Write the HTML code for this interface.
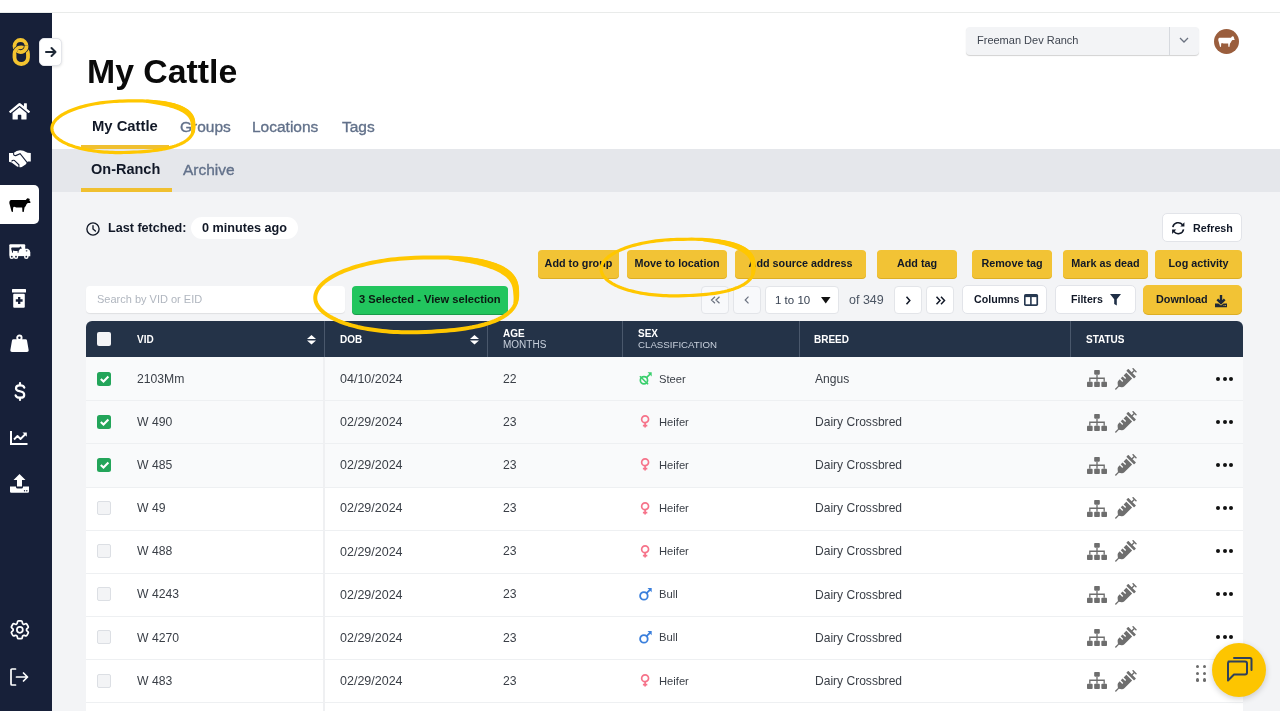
<!DOCTYPE html>
<html><head><meta charset="utf-8"><style>
*{box-sizing:border-box;margin:0;padding:0}
html,body{width:1280px;height:720px;overflow:hidden;background:#fff;font-family:"Liberation Sans",sans-serif}
.a{position:absolute}
.t{position:absolute;white-space:nowrap;line-height:1;will-change:transform}
.yb{will-change:transform}
svg{position:absolute;overflow:visible}
</style></head><body>
<div class="a" style="left:0px;top:12px;width:1280px;height:1px;background:#e9ebea;"></div>
<div class="a" style="left:0px;top:13px;width:52px;height:698px;background:#172039;"></div>
<div class="a" style="left:0px;top:13px;width:52px;height:1px;background:#0e1a33;"></div>
<div class="a" style="left:52px;top:149px;width:1228px;height:43px;background:#e5e7eb;"></div>
<div class="a" style="left:52px;top:192px;width:1228px;height:519px;background:#f3f4f6;"></div>
<svg style="left:12px;top:38px;" width="19" height="28" viewBox="0 0 19 28"><circle cx="8.5" cy="8" r="6" fill="none" stroke="#f4c430" stroke-width="3.8"/><rect x="2.5" y="9.4" width="13.5" height="16.6" rx="6.6" fill="none" stroke="#172039" stroke-width="5.2"/><rect x="2.5" y="9.4" width="13.5" height="16.6" rx="6.6" fill="none" stroke="#f4c430" stroke-width="3.8"/><path d="M14.48 7.48 A6 6 0 0 1 5.50 13.20" fill="none" stroke="#172039" stroke-width="5.2"/><path d="M14.48 7.48 A6 6 0 0 1 5.50 13.20" fill="none" stroke="#f4c430" stroke-width="3.8"/></svg>
<div class="a" style="left:39px;top:38px;width:23px;height:28px;background:#fff;border-radius:5px;border:1px solid #e3e5ea;box-shadow:0 1px 3px rgba(0,0,0,.12)"></div>
<svg style="left:45px;top:46px;" width="12" height="12" viewBox="0 0 12 12"><path d="M1 6 H10.5 M6.5 2 L10.5 6 L6.5 10" fill="none" stroke="#1f2937" stroke-width="2" stroke-linecap="round" stroke-linejoin="round"/></svg>
<svg style="left:9px;top:101.8px;" width="21.1" height="18.7" viewBox="0 0 576 512"><path fill="#fff" d="M280.37 148.26L96 300.11V464a16 16 0 0 0 16 16l112.06-.29a16 16 0 0 0 15.92-16V368a16 16 0 0 1 16-16h64a16 16 0 0 1 16 16v95.64a16 16 0 0 0 16 16.05L464 480a16 16 0 0 0 16-16V300L295.67 148.26a12.19 12.19 0 0 0-15.3 0zM571.6 251.47L488 182.56V44.05a12 12 0 0 0-12-12h-56a12 12 0 0 0-12 12v72.61L318.47 43a48 48 0 0 0-61 0L4.34 251.47a12 12 0 0 0-1.6 16.9l25.5 31A12 12 0 0 0 45.15 301l235.22-193.74a12.19 12.19 0 0 1 15.3 0L530.9 301a12 12 0 0 0 16.9-1.6l25.5-31a12 12 0 0 0-1.7-16.93z"/></svg>
<svg style="left:8.7px;top:149.5px;" width="22" height="18" viewBox="0 0 22 18"><path fill="#fff" d="M0 3 H4.6 Q7.5 0.6 11 0.3 Q14 0.3 18.5 2.7 L21.8 3 V11.6 H18.8 L16.6 14.6 L12.8 17 Q10 17.8 8 16.6 L2.6 12.4 L0 11.8 Z"/><path fill="none" stroke="#172039" stroke-width="1.1" stroke-linecap="round" d="M4.6 3.2 Q4.3 5.7 6.8 5.6 L11.1 3.7 L18.4 12.9"/><path fill="none" stroke="#172039" stroke-width="1.1" d="M2.6 11.4 Q3.8 9.6 5.6 10.6 L9.9 14.8 V18"/></svg>
<div class="a" style="left:0px;top:185px;width:39px;height:39px;background:#fff;border-radius:0 5px 5px 0"></div>
<svg style="left:8.7px;top:198px;" width="22" height="14" viewBox="0 0 22 14"><g fill="#000"><path d="M1.8 2.1 Q0.2 2.4 0.3 5 L2.5 13.3 Q3 14.2 3.9 13.7 L4.1 10 Q4.5 8.2 6 9.1 Q7 9.6 9 9.6 H13.2 L13.4 13.4 Q13.9 14.3 14.8 13.7 L15.5 9.4 Q17 8 17.5 6.2 L18.8 4.9 H21 Q21.9 4.6 21.4 3.8 L20.4 2.4 L20.8 0.9 L19.6 0.4 L18.3 0.2 L16.8 2.1 Z"/></g></svg>
<svg style="left:9.3px;top:243.8px;" width="22" height="15" viewBox="0 0 22 15"><g fill="#fff"><rect x="0.3" y="0.2" width="15.9" height="12" rx="1"/><path d="M15.5 4.7 H18.8 Q21.3 5.5 21.3 8.6 V12.2 H15.5 Z"/><circle cx="2.8" cy="12.7" r="2.3"/><circle cx="7" cy="12.7" r="2.3"/><circle cx="17.3" cy="12.7" r="2.3"/></g><g fill="#172039"><circle cx="2.8" cy="12.7" r="0.9"/><circle cx="7" cy="12.7" r="0.9"/><circle cx="17.3" cy="12.7" r="0.9"/><path d="M9.3 12.4 H14.8 V13.2 H9.3 Z"/><ellipse cx="17.6" cy="6.8" rx="0.9" ry="0.6"/></g><g fill="#172039" transform="translate(2,2.5) scale(0.5 0.46)"><path d="M1.8 2.1 Q0.2 2.4 0.3 5 L2.5 13.3 Q3 14.2 3.9 13.7 L4.1 10 Q4.5 8.2 6 9.1 Q7 9.6 9 9.6 H13.2 L13.4 13.4 Q13.9 14.3 14.8 13.7 L15.5 9.4 Q17 8 17.5 6.2 L18.8 4.9 H21 Q21.9 4.6 21.4 3.8 L20.4 2.4 L20.8 0.9 L19.6 0.4 L18.3 0.2 L16.8 2.1 Z"/></g></svg>
<svg style="left:12px;top:289px;" width="14" height="19" viewBox="0 0 14 19"><rect x="0" y="0" width="14" height="3.5" rx="0.5" fill="#fff"/><rect x="1.2" y="4.8" width="11.6" height="14" rx="1" fill="#fff"/><path d="M7.2 8.1 V14.9 M3.8 11.5 H10.6" stroke="#172039" stroke-width="2.3"/></svg>
<svg style="left:10px;top:335px;" width="19" height="17" viewBox="0 0 19 17"><circle cx="9.4" cy="2.75" r="2.2" fill="none" stroke="#fff" stroke-width="1.9"/><path fill="#fff" d="M3.5 4.2 H15.5 Q16.8 4.2 17 5.4 L18.7 15.2 Q18.8 17 17 17 H2 Q0.2 17 0.3 15.2 L2 5.4 Q2.2 4.2 3.5 4.2 Z"/></svg>
<svg style="left:13.5px;top:382px;" width="12" height="19" viewBox="0 0 12 19"><g fill="none" stroke="#fff" stroke-width="2.2" stroke-linecap="round"><path d="M10.3 5.6 Q9.6 3.4 6.4 3.4 H5.6 Q2 3.4 2 6.3 Q2 8.6 5.4 9.2 L6.8 9.5 Q10.2 10.2 10.2 12.9 Q10.2 15.7 6.6 15.7 H5.6 Q2.3 15.7 1.6 13.4"/><path d="M6 1 V3.2 M6 15.8 V18"/></g></svg>
<svg style="left:10px;top:431px;" width="18" height="14" viewBox="0 0 18 14"><path d="M1 0 V13 H17.5" fill="none" stroke="#fff" stroke-width="2"/><path d="M4 8.5 L7.5 5 L10.5 8 L15.5 3" fill="none" stroke="#fff" stroke-width="1.8" stroke-linejoin="round"/><path d="M12.5 1.5 H16.8 V5.8 Z" fill="#fff"/></svg>
<svg style="left:10px;top:474px;" width="19" height="19" viewBox="0 0 19 19"><path fill="#fff" d="M9.5 0 L15.5 6 H12 V12.5 H7 V6 H3.5 Z"/><path fill="#fff" d="M0 12.5 H6 V13.2 Q6.2 14.5 7.5 14.5 H11.5 Q12.8 14.5 13 13.2 V12.5 H19 V17.5 Q19 18.8 17.7 18.8 H1.3 Q0 18.8 0 17.5 Z"/><circle cx="14.5" cy="16.8" r="0.7" fill="#172039"/><circle cx="16.8" cy="16.8" r="0.7" fill="#172039"/></svg>
<svg style="left:7.9px;top:618.4px;" width="23.7" height="23.7" viewBox="0 0 24 24"><g fill="none" stroke="#fff" stroke-width="1.75" stroke-linejoin="round"><path d="M9.594 3.94c.09-.542.56-.94 1.11-.94h2.593c.55 0 1.02.398 1.11.94l.213 1.281c.063.374.313.686.645.87.074.04.147.083.22.127.325.196.72.257 1.075.124l1.217-.456a1.125 1.125 0 0 1 1.37.49l1.296 2.247a1.125 1.125 0 0 1-.26 1.431l-1.003.827c-.293.241-.438.613-.43.992a7.723 7.723 0 0 1 0 .255c-.008.378.137.75.43.991l1.004.827c.424.35.534.955.26 1.43l-1.298 2.247a1.125 1.125 0 0 1-1.369.491l-1.217-.456c-.355-.133-.75-.072-1.076.124a6.47 6.47 0 0 1-.22.128c-.331.183-.581.495-.644.869l-.213 1.281c-.09.543-.56.94-1.11.94h-2.594c-.55 0-1.019-.398-1.11-.94l-.213-1.281c-.062-.374-.312-.686-.644-.87a6.52 6.52 0 0 1-.22-.127c-.325-.196-.72-.257-1.076-.124l-1.217.456a1.125 1.125 0 0 1-1.369-.49l-1.297-2.247a1.125 1.125 0 0 1 .26-1.431l1.004-.827c.292-.24.437-.613.43-.991a6.932 6.932 0 0 1 0-.255c.007-.38-.138-.751-.43-.992l-1.004-.827a1.125 1.125 0 0 1-.26-1.43l1.297-2.247a1.125 1.125 0 0 1 1.37-.491l1.216.456c.356.133.751.072 1.076-.124.072-.044.146-.086.22-.128.332-.183.582-.495.644-.869l.214-1.28Z"/><circle cx="12" cy="12" r="3"/></g></svg>
<svg style="left:10px;top:668px;" width="19" height="18" viewBox="0 0 19 18"><g fill="none" stroke="#fff" stroke-width="1.7" stroke-linecap="round" stroke-linejoin="round"><path d="M5.5 1 H2 Q1 1 1 2 V16 Q1 17 2 17 H5.5"/><path d="M6.5 9 H17.5 M13.5 5 L17.5 9 L13.5 13"/></g></svg>
<div class="t" style="left:86.5px;top:54.89px;font-size:33.8px;color:#0a0a0a;font-weight:bold;">My Cattle</div>
<div class="t" style="left:91.5px;top:118.97px;font-size:14.8px;color:#111827;font-weight:bold;">My Cattle</div>
<div class="a" style="left:81px;top:145px;width:88px;height:4px;background:#f0c030;"></div>
<div class="t" style="left:180px;top:118.88px;font-size:15.5px;color:#62718a;-webkit-text-stroke:0.35px #62718a">Groups</div>
<div class="t" style="left:252px;top:118.88px;font-size:15.5px;color:#62718a;-webkit-text-stroke:0.35px #62718a">Locations</div>
<div class="t" style="left:342px;top:118.88px;font-size:15.5px;color:#62718a;-webkit-text-stroke:0.35px #62718a">Tags</div>
<div class="t" style="left:91.3px;top:161.73px;font-size:14.5px;color:#111827;font-weight:bold;">On-Ranch</div>
<div class="a" style="left:81px;top:188px;width:91px;height:4px;background:#f0c030;"></div>
<div class="t" style="left:183px;top:162.38px;font-size:15.5px;color:#62718a;-webkit-text-stroke:0.35px #62718a">Archive</div>
<div class="a" style="left:966px;top:27px;width:233px;height:28px;background:#f3f4f6;border-radius:4px;box-shadow:0 1px 1px rgba(0,0,0,.18)"></div>
<div class="a" style="left:1169px;top:27px;width:1px;height:28px;background:#d6d9de;"></div>
<div class="t" style="left:977px;top:35.19px;font-size:11px;color:#3f4550;">Freeman Dev Ranch</div>
<svg style="left:1179px;top:37px;" width="10" height="6" viewBox="0 0 10 6"><path d="M1 1 L5 5 L9 1" fill="none" stroke="#6b7280" stroke-width="1.3"/></svg>
<div class="a" style="left:1213.5px;top:28.5px;width:25.5px;height:25.5px;border-radius:50%;background:#9a5e3d"></div>
<svg style="left:1217.8px;top:36px;" width="17" height="11.2" viewBox="0 0 22 14"><g fill="#fff"><path d="M1.8 2.1 Q0.2 2.4 0.3 5 L2.5 13.3 Q3 14.2 3.9 13.7 L4.1 10 Q4.5 8.2 6 9.1 Q7 9.6 9 9.6 H13.2 L13.4 13.4 Q13.9 14.3 14.8 13.7 L15.5 9.4 Q17 8 17.5 6.2 L18.8 4.9 H21 Q21.9 4.6 21.4 3.8 L20.4 2.4 L20.8 0.9 L19.6 0.4 L18.3 0.2 L16.8 2.1 Z"/></g></svg>
<svg style="left:86px;top:222px;" width="14" height="14" viewBox="0 0 14 14"><circle cx="7" cy="7" r="6.1" fill="none" stroke="#111827" stroke-width="1.35"/><path d="M7 3.6 V7 L9.4 9.1" fill="none" stroke="#111827" stroke-width="1.35" stroke-linecap="round"/></svg>
<div class="t" style="left:108px;top:221.63px;font-size:12.6px;color:#111827;font-weight:bold;">Last fetched:</div>
<div class="a" style="left:191px;top:217px;width:107px;height:22px;background:#fff;border-radius:11px"></div>
<div class="t" style="left:202px;top:221.59px;font-size:12.65px;color:#111827;font-weight:bold;">0 minutes ago</div>
<div class="a" style="left:1162px;top:213px;width:80px;height:29px;background:#fff;border-radius:5px;border:1px solid #e2e4e9"></div>
<svg style="left:1171px;top:221px;" width="14" height="14" viewBox="0 0 14 14"><g fill="none" stroke="#111827" stroke-width="1.55"><path d="M1.82 6.06 A5.5 5.5 0 0 1 11.53 3.81"/><path d="M12.58 8.34 A5.5 5.5 0 0 1 2.87 10.59"/></g><path d="M13.4 1.2 V5.4 H9.3 Z M1.1 12.9 V8.6 H5.2 Z" fill="#111827"/></svg>
<div class="t" style="left:1193px;top:222.54px;font-size:10.7px;color:#111827;font-weight:bold;">Refresh</div>
<div class="a yb" style="left:538px;top:250px;width:81px;height:28px;background:#f2c335;border-radius:4px;box-shadow:0 1px 0 #dcae25;display:flex;align-items:center;justify-content:center;font-size:10.8px;font-weight:bold;color:#111827;white-space:nowrap;line-height:1;padding-bottom:1.5px">Add to group</div>
<div class="a yb" style="left:627px;top:250px;width:100px;height:28px;background:#f2c335;border-radius:4px;box-shadow:0 1px 0 #dcae25;display:flex;align-items:center;justify-content:center;font-size:10.8px;font-weight:bold;color:#111827;white-space:nowrap;line-height:1;padding-bottom:1.5px">Move to location</div>
<div class="a yb" style="left:735px;top:250px;width:131px;height:28px;background:#f2c335;border-radius:4px;box-shadow:0 1px 0 #dcae25;display:flex;align-items:center;justify-content:center;font-size:10.8px;font-weight:bold;color:#111827;white-space:nowrap;line-height:1;padding-bottom:1.5px">Add source address</div>
<div class="a yb" style="left:877px;top:250px;width:80px;height:28px;background:#f2c335;border-radius:4px;box-shadow:0 1px 0 #dcae25;display:flex;align-items:center;justify-content:center;font-size:10.8px;font-weight:bold;color:#111827;white-space:nowrap;line-height:1;padding-bottom:1.5px">Add tag</div>
<div class="a yb" style="left:972px;top:250px;width:80px;height:28px;background:#f2c335;border-radius:4px;box-shadow:0 1px 0 #dcae25;display:flex;align-items:center;justify-content:center;font-size:10.8px;font-weight:bold;color:#111827;white-space:nowrap;line-height:1;padding-bottom:1.5px">Remove tag</div>
<div class="a yb" style="left:1063px;top:250px;width:85px;height:28px;background:#f2c335;border-radius:4px;box-shadow:0 1px 0 #dcae25;display:flex;align-items:center;justify-content:center;font-size:10.8px;font-weight:bold;color:#111827;white-space:nowrap;line-height:1;padding-bottom:1.5px">Mark as dead</div>
<div class="a yb" style="left:1155px;top:250px;width:87px;height:28px;background:#f2c335;border-radius:4px;box-shadow:0 1px 0 #dcae25;display:flex;align-items:center;justify-content:center;font-size:10.8px;font-weight:bold;color:#111827;white-space:nowrap;line-height:1;padding-bottom:1.5px">Log activity</div>
<div class="a" style="left:86px;top:286px;width:259px;height:27px;background:#fff;border-radius:4px;box-shadow:0 1px 1px rgba(0,0,0,.08)"></div>
<div class="t" style="left:97px;top:294.19px;font-size:11px;color:#b0b6bf;">Search by VID or EID</div>
<div class="a" style="left:352px;top:286px;width:156px;height:28px;background:#22c55e;border-radius:4px;box-shadow:0 1px 0 #1a9a4a"></div>
<div class="t" style="left:359px;top:294.36px;font-size:11.15px;color:#0b1a12;font-weight:bold;">3 Selected - View selection</div>
<div class="a" style="left:700.8px;top:285.5px;width:28px;height:28px;background:#f8f9fb;border-radius:4px;border:1px solid #e3e5e9"></div>
<div class="a" style="left:733px;top:285.5px;width:28px;height:28px;background:#f8f9fb;border-radius:4px;border:1px solid #e3e5e9"></div>
<div class="a" style="left:893.5px;top:285.5px;width:28px;height:28px;background:#fff;border-radius:4px;border:1px solid #e3e5e9"></div>
<div class="a" style="left:926px;top:285.5px;width:28px;height:28px;background:#fff;border-radius:4px;border:1px solid #e3e5e9"></div>
<svg style="left:710px;top:296px;" width="11" height="8" viewBox="0 0 11 8"><path d="M5 0.8 L1.5 4 L5 7.2 M9.5 0.8 L6 4 L9.5 7.2" fill="none" stroke="#6b7280" stroke-width="1.2"/></svg>
<svg style="left:744px;top:296px;" width="6" height="8" viewBox="0 0 6 8"><path d="M4.5 0.6 L1.2 4 L4.5 7.4" fill="none" stroke="#6b7280" stroke-width="1.2"/></svg>
<svg style="left:905px;top:295.5px;" width="6" height="9" viewBox="0 0 6 9"><path d="M1.5 0.8 L4.8 4.5 L1.5 8.2" fill="none" stroke="#111827" stroke-width="1.5"/></svg>
<svg style="left:935px;top:295.5px;" width="11" height="9" viewBox="0 0 11 9"><path d="M1.5 0.8 L5 4.5 L1.5 8.2 M6 0.8 L9.5 4.5 L6 8.2" fill="none" stroke="#111827" stroke-width="1.5"/></svg>
<div class="a" style="left:765.3px;top:285.5px;width:74px;height:28px;background:#fff;border-radius:4px;border:1px solid #e3e5e9"></div>
<div class="t" style="left:775px;top:295.27px;font-size:11.5px;color:#374151;">1 to 10</div>
<svg style="left:821px;top:297px;" width="9.5" height="6.5" viewBox="0 0 9.5 6.5"><path d="M0 0 H9.5 L4.75 6.5 Z" fill="#111"/></svg>
<div class="t" style="left:849px;top:294.42px;font-size:12.5px;color:#4b5563;">of 349</div>
<div class="a" style="left:962px;top:285px;width:85px;height:29px;background:#fff;border-radius:5px;border:1px solid #e2e4e9"></div>
<div class="t" style="left:974px;top:294.28px;font-size:10.65px;color:#111827;font-weight:bold;">Columns</div>
<svg style="left:1024.4px;top:293.9px;" width="14.1" height="11.9" viewBox="0 0 14.1 11.9"><rect x="0" y="0" width="14.1" height="11.9" rx="1.6" fill="#263850"/><rect x="1.6" y="3.1" width="4.5" height="7.2" fill="#fff"/><rect x="7.7" y="3.1" width="4.7" height="7.2" fill="#fff"/></svg>
<div class="a" style="left:1055px;top:285px;width:81px;height:29px;background:#fff;border-radius:5px;border:1px solid #e2e4e9"></div>
<div class="t" style="left:1071px;top:294.33px;font-size:10.6px;color:#111827;font-weight:bold;">Filters</div>
<svg style="left:1110px;top:294px;" width="11" height="12" viewBox="0 0 11 12"><path d="M0 0 H11 L6.8 5.2 V11.5 L4.2 10 V5.2 Z" fill="#1f2f46"/></svg>
<div class="a" style="left:1143px;top:285px;width:99px;height:29px;background:#f2c335;border-radius:5px;box-shadow:0 1px 0 #dcae25"></div>
<div class="t" style="left:1156px;top:294.16px;font-size:10.8px;color:#111827;font-weight:bold;">Download</div>
<svg style="left:1215px;top:294.6px;" width="12" height="12.2" viewBox="0 0 12 12.2"><path d="M6 0 V7.6 M2.3 4.4 L6 8.1 L9.7 4.4" fill="none" stroke="#1f2937" stroke-width="2.4"/><path d="M0 8.4 H3.4 L6 10.6 L8.6 8.4 H12 V12.2 H0 Z" fill="#1f2937"/><circle cx="9" cy="10.6" r="0.5" fill="#f2c335"/><circle cx="10.5" cy="10.6" r="0.5" fill="#f2c335"/></svg>
<div class="a" style="left:86px;top:321px;width:1157px;height:36px;background:#243348;border-radius:6px 6px 0 0"></div>
<div class="a" style="left:97px;top:332px;width:14px;height:14px;background:#f3f4f6;border-radius:2px"></div>
<div class="t" style="left:137px;top:334.54px;font-size:10px;color:#ffffff;font-weight:bold;">VID</div>
<div class="t" style="left:340px;top:334.54px;font-size:10px;color:#ffffff;font-weight:bold;">DOB</div>
<div class="t" style="left:814px;top:334.54px;font-size:10px;color:#ffffff;font-weight:bold;">BREED</div>
<div class="t" style="left:1086px;top:334.54px;font-size:10px;color:#ffffff;font-weight:bold;">STATUS</div>
<div class="t" style="left:503px;top:329.04px;font-size:10px;color:#ffffff;font-weight:bold;">AGE</div>
<div class="t" style="left:503px;top:340.04px;font-size:10px;color:#c8d0dc;">MONTHS</div>
<div class="t" style="left:638px;top:329.04px;font-size:10px;color:#ffffff;font-weight:bold;">SEX</div>
<div class="t" style="left:638px;top:340.29px;font-size:9.7px;color:#c8d0dc;">CLASSIFICATION</div>
<div class="a" style="left:324px;top:321px;width:1px;height:36px;background:#4a586c;"></div>
<div class="a" style="left:487px;top:321px;width:1px;height:36px;background:#4a586c;"></div>
<div class="a" style="left:622px;top:321px;width:1px;height:36px;background:#4a586c;"></div>
<div class="a" style="left:799px;top:321px;width:1px;height:36px;background:#4a586c;"></div>
<div class="a" style="left:1070px;top:321px;width:1px;height:36px;background:#4a586c;"></div>
<svg style="left:307px;top:334.5px;" width="9" height="10" viewBox="0 0 9 10"><path d="M4.5 0 L9 4 H0 Z M0 5.5 H9 L4.5 9.5 Z" fill="#fff"/></svg>
<svg style="left:470px;top:334.5px;" width="9" height="10" viewBox="0 0 9 10"><path d="M4.5 0 L9 4 H0 Z M0 5.5 H9 L4.5 9.5 Z" fill="#fff"/></svg>
<div class="a" style="left:86px;top:357px;width:1157px;height:354px;background:#ffffff;"></div>
<div class="a" style="left:86px;top:357px;width:1157px;height:130px;background:#f9fafb;"></div>
<div class="a" style="left:86px;top:400px;width:1157px;height:1px;background:#eef0f2;"></div>
<div class="a" style="left:86px;top:443px;width:1157px;height:1px;background:#eef0f2;"></div>
<div class="a" style="left:86px;top:487px;width:1157px;height:1px;background:#eef0f2;"></div>
<div class="a" style="left:86px;top:530px;width:1157px;height:1px;background:#eef0f2;"></div>
<div class="a" style="left:86px;top:573px;width:1157px;height:1px;background:#eef0f2;"></div>
<div class="a" style="left:86px;top:616px;width:1157px;height:1px;background:#eef0f2;"></div>
<div class="a" style="left:86px;top:659px;width:1157px;height:1px;background:#eef0f2;"></div>
<div class="a" style="left:86px;top:702px;width:1157px;height:1px;background:#eef0f2;"></div>
<div class="a" style="left:96.7px;top:371.60px;width:14.3px;height:14.2px;background:#23a55a;border-radius:2.5px"></div>
<svg style="left:99.5px;top:374.1px;" width="9" height="9" viewBox="0 0 9 9"><path d="M0.8 5.1 L3.5 7.6 L8.4 2.6" fill="none" stroke="#fff" stroke-width="2.1"/></svg>
<div class="t" style="left:137px;top:372.67px;font-size:12.2px;color:#3a3f47;">2103Mm</div>
<div class="t" style="left:340px;top:373.02px;font-size:12.5px;color:#3a3f47;">04/10/2024</div>
<div class="t" style="left:503px;top:372.67px;font-size:12.2px;color:#3a3f47;">22</div>
<svg style="left:638.5px;top:372.1px;" width="13" height="13" viewBox="0 0 13 13"><g fill="none" stroke="#39cf6c" stroke-width="1.7"><circle cx="4.95" cy="8.25" r="3.6"/><path d="M7.5 5.7 L11.2 2"/><path d="M0.9 4.2 L9.1 12.2" stroke-width="1.6"/></g><path d="M8.6 0.3 H12.7 V4.4 Z" fill="#39cf6c"/></svg>
<div class="t" style="left:658.5px;top:373.52px;font-size:11.2px;color:#3a3f47;">Steer</div>
<div class="t" style="left:815px;top:372.80px;font-size:12.05px;color:#3a3f47;">Angus</div>
<svg style="left:1087px;top:370.40000000000003px;" width="20" height="17" viewBox="0 0 19.5 16.5"><g fill="#6e6e6e"><rect x="7" y="0" width="5.5" height="4.5" rx="0.8"/><rect x="0" y="11.5" width="5.5" height="5" rx="0.8"/><rect x="7" y="11.5" width="5.5" height="5" rx="0.8"/><rect x="14" y="11.5" width="5.5" height="5" rx="0.8"/></g><path d="M9.75 4.5 V11.5 M2.75 11.5 V8 H16.75 V11.5" fill="none" stroke="#6e6e6e" stroke-width="1.3"/></svg>
<svg style="left:1114.8px;top:367.6px;" width="21.8" height="21.8" viewBox="0 0 512 512"><path fill="#6e6e6e" d="M201.5 174.8l55.7 55.8c3.1 3.1 3.1 8.2 0 11.3l-11.3 11.3c-3.1 3.1-8.2 3.1-11.3 0l-55.7-55.8-45.3 45.3 55.8 55.8c3.1 3.1 3.1 8.2 0 11.3l-11.3 11.3c-3.1 3.1-8.2 3.1-11.3 0L111 265.2l-26.4 26.4c-17.3 17.3-25.6 41.1-23 65.4l7.1 63.6L2.3 487c-3.1 3.1-3.1 8.2 0 11.3l11.3 11.3c3.1 3.1 8.2 3.1 11.3 0l66.3-66.3 63.6 7.1c23.9 2.6 47.9-5.4 65.4-23l181.9-181.9-135.7-135.7-64.9 65zm308.2-93.3L430.5 2.3c-3.1-3.1-8.2-3.1-11.3 0l-11.3 11.3c-3.1 3.1-3.1 8.2 0 11.3l28.3 28.3-45.3 45.3-56.6-56.6-17-17c-3.1-3.1-8.2-3.1-11.3 0l-33.9 33.9c-3.1 3.1-3.1 8.2 0 11.3l17 17L424.8 223l17 17c3.1 3.1 8.2 3.1 11.3 0l33.9-34c3.1-3.1 3.1-8.2 0-11.3l-73.5-73.5 45.3-45.3 28.3 28.3c3.1 3.1 8.2 3.1 11.3 0l11.3-11.3c3.1-3.2 3.1-8.2 0-11.4z"/></svg>
<div class="a" style="left:1216.20px;top:376.60px;width:4px;height:4px;border-radius:50%;background:#111"></div>
<div class="a" style="left:1222.50px;top:376.60px;width:4px;height:4px;border-radius:50%;background:#111"></div>
<div class="a" style="left:1228.80px;top:376.60px;width:4px;height:4px;border-radius:50%;background:#111"></div>
<div class="a" style="left:96.7px;top:414.74px;width:14.3px;height:14.2px;background:#23a55a;border-radius:2.5px"></div>
<svg style="left:99.5px;top:417.24px;" width="9" height="9" viewBox="0 0 9 9"><path d="M0.8 5.1 L3.5 7.6 L8.4 2.6" fill="none" stroke="#fff" stroke-width="2.1"/></svg>
<div class="t" style="left:137px;top:415.81px;font-size:12.2px;color:#3a3f47;">W 490</div>
<div class="t" style="left:340px;top:416.16px;font-size:12.5px;color:#3a3f47;">02/29/2024</div>
<div class="t" style="left:503px;top:415.81px;font-size:12.2px;color:#3a3f47;">23</div>
<svg style="left:638.5px;top:415.24px;" width="13" height="13" viewBox="0 0 13 13"><g fill="none" stroke="#f6738a" stroke-width="1.7"><circle cx="6.1" cy="4.26" r="3.45"/><path d="M6.1 7.7 V12.6 M3.9 10.6 H8.3"/></g></svg>
<div class="t" style="left:658.5px;top:416.66px;font-size:11.2px;color:#3a3f47;">Heifer</div>
<div class="t" style="left:815px;top:415.94px;font-size:12.05px;color:#3a3f47;">Dairy Crossbred</div>
<svg style="left:1087px;top:413.54px;" width="20" height="17" viewBox="0 0 19.5 16.5"><g fill="#6e6e6e"><rect x="7" y="0" width="5.5" height="4.5" rx="0.8"/><rect x="0" y="11.5" width="5.5" height="5" rx="0.8"/><rect x="7" y="11.5" width="5.5" height="5" rx="0.8"/><rect x="14" y="11.5" width="5.5" height="5" rx="0.8"/></g><path d="M9.75 4.5 V11.5 M2.75 11.5 V8 H16.75 V11.5" fill="none" stroke="#6e6e6e" stroke-width="1.3"/></svg>
<svg style="left:1114.8px;top:410.74px;" width="21.8" height="21.8" viewBox="0 0 512 512"><path fill="#6e6e6e" d="M201.5 174.8l55.7 55.8c3.1 3.1 3.1 8.2 0 11.3l-11.3 11.3c-3.1 3.1-8.2 3.1-11.3 0l-55.7-55.8-45.3 45.3 55.8 55.8c3.1 3.1 3.1 8.2 0 11.3l-11.3 11.3c-3.1 3.1-8.2 3.1-11.3 0L111 265.2l-26.4 26.4c-17.3 17.3-25.6 41.1-23 65.4l7.1 63.6L2.3 487c-3.1 3.1-3.1 8.2 0 11.3l11.3 11.3c3.1 3.1 8.2 3.1 11.3 0l66.3-66.3 63.6 7.1c23.9 2.6 47.9-5.4 65.4-23l181.9-181.9-135.7-135.7-64.9 65zm308.2-93.3L430.5 2.3c-3.1-3.1-8.2-3.1-11.3 0l-11.3 11.3c-3.1 3.1-3.1 8.2 0 11.3l28.3 28.3-45.3 45.3-56.6-56.6-17-17c-3.1-3.1-8.2-3.1-11.3 0l-33.9 33.9c-3.1 3.1-3.1 8.2 0 11.3l17 17L424.8 223l17 17c3.1 3.1 8.2 3.1 11.3 0l33.9-34c3.1-3.1 3.1-8.2 0-11.3l-73.5-73.5 45.3-45.3 28.3 28.3c3.1 3.1 8.2 3.1 11.3 0l11.3-11.3c3.1-3.2 3.1-8.2 0-11.4z"/></svg>
<div class="a" style="left:1216.20px;top:419.74px;width:4px;height:4px;border-radius:50%;background:#111"></div>
<div class="a" style="left:1222.50px;top:419.74px;width:4px;height:4px;border-radius:50%;background:#111"></div>
<div class="a" style="left:1228.80px;top:419.74px;width:4px;height:4px;border-radius:50%;background:#111"></div>
<div class="a" style="left:96.7px;top:457.88px;width:14.3px;height:14.2px;background:#23a55a;border-radius:2.5px"></div>
<svg style="left:99.5px;top:460.38px;" width="9" height="9" viewBox="0 0 9 9"><path d="M0.8 5.1 L3.5 7.6 L8.4 2.6" fill="none" stroke="#fff" stroke-width="2.1"/></svg>
<div class="t" style="left:137px;top:458.95px;font-size:12.2px;color:#3a3f47;">W 485</div>
<div class="t" style="left:340px;top:459.30px;font-size:12.5px;color:#3a3f47;">02/29/2024</div>
<div class="t" style="left:503px;top:458.95px;font-size:12.2px;color:#3a3f47;">23</div>
<svg style="left:638.5px;top:458.38px;" width="13" height="13" viewBox="0 0 13 13"><g fill="none" stroke="#f6738a" stroke-width="1.7"><circle cx="6.1" cy="4.26" r="3.45"/><path d="M6.1 7.7 V12.6 M3.9 10.6 H8.3"/></g></svg>
<div class="t" style="left:658.5px;top:459.80px;font-size:11.2px;color:#3a3f47;">Heifer</div>
<div class="t" style="left:815px;top:459.08px;font-size:12.05px;color:#3a3f47;">Dairy Crossbred</div>
<svg style="left:1087px;top:456.68px;" width="20" height="17" viewBox="0 0 19.5 16.5"><g fill="#6e6e6e"><rect x="7" y="0" width="5.5" height="4.5" rx="0.8"/><rect x="0" y="11.5" width="5.5" height="5" rx="0.8"/><rect x="7" y="11.5" width="5.5" height="5" rx="0.8"/><rect x="14" y="11.5" width="5.5" height="5" rx="0.8"/></g><path d="M9.75 4.5 V11.5 M2.75 11.5 V8 H16.75 V11.5" fill="none" stroke="#6e6e6e" stroke-width="1.3"/></svg>
<svg style="left:1114.8px;top:453.88px;" width="21.8" height="21.8" viewBox="0 0 512 512"><path fill="#6e6e6e" d="M201.5 174.8l55.7 55.8c3.1 3.1 3.1 8.2 0 11.3l-11.3 11.3c-3.1 3.1-8.2 3.1-11.3 0l-55.7-55.8-45.3 45.3 55.8 55.8c3.1 3.1 3.1 8.2 0 11.3l-11.3 11.3c-3.1 3.1-8.2 3.1-11.3 0L111 265.2l-26.4 26.4c-17.3 17.3-25.6 41.1-23 65.4l7.1 63.6L2.3 487c-3.1 3.1-3.1 8.2 0 11.3l11.3 11.3c3.1 3.1 8.2 3.1 11.3 0l66.3-66.3 63.6 7.1c23.9 2.6 47.9-5.4 65.4-23l181.9-181.9-135.7-135.7-64.9 65zm308.2-93.3L430.5 2.3c-3.1-3.1-8.2-3.1-11.3 0l-11.3 11.3c-3.1 3.1-3.1 8.2 0 11.3l28.3 28.3-45.3 45.3-56.6-56.6-17-17c-3.1-3.1-8.2-3.1-11.3 0l-33.9 33.9c-3.1 3.1-3.1 8.2 0 11.3l17 17L424.8 223l17 17c3.1 3.1 8.2 3.1 11.3 0l33.9-34c3.1-3.1 3.1-8.2 0-11.3l-73.5-73.5 45.3-45.3 28.3 28.3c3.1 3.1 8.2 3.1 11.3 0l11.3-11.3c3.1-3.2 3.1-8.2 0-11.4z"/></svg>
<div class="a" style="left:1216.20px;top:462.88px;width:4px;height:4px;border-radius:50%;background:#111"></div>
<div class="a" style="left:1222.50px;top:462.88px;width:4px;height:4px;border-radius:50%;background:#111"></div>
<div class="a" style="left:1228.80px;top:462.88px;width:4px;height:4px;border-radius:50%;background:#111"></div>
<div class="a" style="left:97px;top:501.02px;width:14px;height:14px;background:#f3f4f6;border-radius:2px;border:1px solid #dcdfe4"></div>
<div class="t" style="left:137px;top:502.09px;font-size:12.2px;color:#3a3f47;">W 49</div>
<div class="t" style="left:340px;top:502.44px;font-size:12.5px;color:#3a3f47;">02/29/2024</div>
<div class="t" style="left:503px;top:502.09px;font-size:12.2px;color:#3a3f47;">23</div>
<svg style="left:638.5px;top:501.52000000000004px;" width="13" height="13" viewBox="0 0 13 13"><g fill="none" stroke="#f6738a" stroke-width="1.7"><circle cx="6.1" cy="4.26" r="3.45"/><path d="M6.1 7.7 V12.6 M3.9 10.6 H8.3"/></g></svg>
<div class="t" style="left:658.5px;top:502.94px;font-size:11.2px;color:#3a3f47;">Heifer</div>
<div class="t" style="left:815px;top:502.22px;font-size:12.05px;color:#3a3f47;">Dairy Crossbred</div>
<svg style="left:1087px;top:499.82000000000005px;" width="20" height="17" viewBox="0 0 19.5 16.5"><g fill="#6e6e6e"><rect x="7" y="0" width="5.5" height="4.5" rx="0.8"/><rect x="0" y="11.5" width="5.5" height="5" rx="0.8"/><rect x="7" y="11.5" width="5.5" height="5" rx="0.8"/><rect x="14" y="11.5" width="5.5" height="5" rx="0.8"/></g><path d="M9.75 4.5 V11.5 M2.75 11.5 V8 H16.75 V11.5" fill="none" stroke="#6e6e6e" stroke-width="1.3"/></svg>
<svg style="left:1114.8px;top:497.02000000000004px;" width="21.8" height="21.8" viewBox="0 0 512 512"><path fill="#6e6e6e" d="M201.5 174.8l55.7 55.8c3.1 3.1 3.1 8.2 0 11.3l-11.3 11.3c-3.1 3.1-8.2 3.1-11.3 0l-55.7-55.8-45.3 45.3 55.8 55.8c3.1 3.1 3.1 8.2 0 11.3l-11.3 11.3c-3.1 3.1-8.2 3.1-11.3 0L111 265.2l-26.4 26.4c-17.3 17.3-25.6 41.1-23 65.4l7.1 63.6L2.3 487c-3.1 3.1-3.1 8.2 0 11.3l11.3 11.3c3.1 3.1 8.2 3.1 11.3 0l66.3-66.3 63.6 7.1c23.9 2.6 47.9-5.4 65.4-23l181.9-181.9-135.7-135.7-64.9 65zm308.2-93.3L430.5 2.3c-3.1-3.1-8.2-3.1-11.3 0l-11.3 11.3c-3.1 3.1-3.1 8.2 0 11.3l28.3 28.3-45.3 45.3-56.6-56.6-17-17c-3.1-3.1-8.2-3.1-11.3 0l-33.9 33.9c-3.1 3.1-3.1 8.2 0 11.3l17 17L424.8 223l17 17c3.1 3.1 8.2 3.1 11.3 0l33.9-34c3.1-3.1 3.1-8.2 0-11.3l-73.5-73.5 45.3-45.3 28.3 28.3c3.1 3.1 8.2 3.1 11.3 0l11.3-11.3c3.1-3.2 3.1-8.2 0-11.4z"/></svg>
<div class="a" style="left:1216.20px;top:506.02px;width:4px;height:4px;border-radius:50%;background:#111"></div>
<div class="a" style="left:1222.50px;top:506.02px;width:4px;height:4px;border-radius:50%;background:#111"></div>
<div class="a" style="left:1228.80px;top:506.02px;width:4px;height:4px;border-radius:50%;background:#111"></div>
<div class="a" style="left:97px;top:544.16px;width:14px;height:14px;background:#f3f4f6;border-radius:2px;border:1px solid #dcdfe4"></div>
<div class="t" style="left:137px;top:545.23px;font-size:12.2px;color:#3a3f47;">W 488</div>
<div class="t" style="left:340px;top:545.58px;font-size:12.5px;color:#3a3f47;">02/29/2024</div>
<div class="t" style="left:503px;top:545.23px;font-size:12.2px;color:#3a3f47;">23</div>
<svg style="left:638.5px;top:544.6600000000001px;" width="13" height="13" viewBox="0 0 13 13"><g fill="none" stroke="#f6738a" stroke-width="1.7"><circle cx="6.1" cy="4.26" r="3.45"/><path d="M6.1 7.7 V12.6 M3.9 10.6 H8.3"/></g></svg>
<div class="t" style="left:658.5px;top:546.08px;font-size:11.2px;color:#3a3f47;">Heifer</div>
<div class="t" style="left:815px;top:545.36px;font-size:12.05px;color:#3a3f47;">Dairy Crossbred</div>
<svg style="left:1087px;top:542.96px;" width="20" height="17" viewBox="0 0 19.5 16.5"><g fill="#6e6e6e"><rect x="7" y="0" width="5.5" height="4.5" rx="0.8"/><rect x="0" y="11.5" width="5.5" height="5" rx="0.8"/><rect x="7" y="11.5" width="5.5" height="5" rx="0.8"/><rect x="14" y="11.5" width="5.5" height="5" rx="0.8"/></g><path d="M9.75 4.5 V11.5 M2.75 11.5 V8 H16.75 V11.5" fill="none" stroke="#6e6e6e" stroke-width="1.3"/></svg>
<svg style="left:1114.8px;top:540.1600000000001px;" width="21.8" height="21.8" viewBox="0 0 512 512"><path fill="#6e6e6e" d="M201.5 174.8l55.7 55.8c3.1 3.1 3.1 8.2 0 11.3l-11.3 11.3c-3.1 3.1-8.2 3.1-11.3 0l-55.7-55.8-45.3 45.3 55.8 55.8c3.1 3.1 3.1 8.2 0 11.3l-11.3 11.3c-3.1 3.1-8.2 3.1-11.3 0L111 265.2l-26.4 26.4c-17.3 17.3-25.6 41.1-23 65.4l7.1 63.6L2.3 487c-3.1 3.1-3.1 8.2 0 11.3l11.3 11.3c3.1 3.1 8.2 3.1 11.3 0l66.3-66.3 63.6 7.1c23.9 2.6 47.9-5.4 65.4-23l181.9-181.9-135.7-135.7-64.9 65zm308.2-93.3L430.5 2.3c-3.1-3.1-8.2-3.1-11.3 0l-11.3 11.3c-3.1 3.1-3.1 8.2 0 11.3l28.3 28.3-45.3 45.3-56.6-56.6-17-17c-3.1-3.1-8.2-3.1-11.3 0l-33.9 33.9c-3.1 3.1-3.1 8.2 0 11.3l17 17L424.8 223l17 17c3.1 3.1 8.2 3.1 11.3 0l33.9-34c3.1-3.1 3.1-8.2 0-11.3l-73.5-73.5 45.3-45.3 28.3 28.3c3.1 3.1 8.2 3.1 11.3 0l11.3-11.3c3.1-3.2 3.1-8.2 0-11.4z"/></svg>
<div class="a" style="left:1216.20px;top:549.16px;width:4px;height:4px;border-radius:50%;background:#111"></div>
<div class="a" style="left:1222.50px;top:549.16px;width:4px;height:4px;border-radius:50%;background:#111"></div>
<div class="a" style="left:1228.80px;top:549.16px;width:4px;height:4px;border-radius:50%;background:#111"></div>
<div class="a" style="left:97px;top:587.30px;width:14px;height:14px;background:#f3f4f6;border-radius:2px;border:1px solid #dcdfe4"></div>
<div class="t" style="left:137px;top:588.37px;font-size:12.2px;color:#3a3f47;">W 4243</div>
<div class="t" style="left:340px;top:588.72px;font-size:12.5px;color:#3a3f47;">02/29/2024</div>
<div class="t" style="left:503px;top:588.37px;font-size:12.2px;color:#3a3f47;">23</div>
<svg style="left:638.5px;top:587.8px;" width="13" height="13" viewBox="0 0 13 13"><g fill="none" stroke="#3a7fdc" stroke-width="1.8"><circle cx="4.9" cy="7.9" r="3.8"/><path d="M7.6 5.2 L11.2 1.6"/></g><path d="M8.5 0.1 H12.7 V4.3 Z" fill="#3a7fdc"/></svg>
<div class="t" style="left:658.5px;top:589.22px;font-size:11.2px;color:#3a3f47;">Bull</div>
<div class="t" style="left:815px;top:588.50px;font-size:12.05px;color:#3a3f47;">Dairy Crossbred</div>
<svg style="left:1087px;top:586.0999999999999px;" width="20" height="17" viewBox="0 0 19.5 16.5"><g fill="#6e6e6e"><rect x="7" y="0" width="5.5" height="4.5" rx="0.8"/><rect x="0" y="11.5" width="5.5" height="5" rx="0.8"/><rect x="7" y="11.5" width="5.5" height="5" rx="0.8"/><rect x="14" y="11.5" width="5.5" height="5" rx="0.8"/></g><path d="M9.75 4.5 V11.5 M2.75 11.5 V8 H16.75 V11.5" fill="none" stroke="#6e6e6e" stroke-width="1.3"/></svg>
<svg style="left:1114.8px;top:583.3px;" width="21.8" height="21.8" viewBox="0 0 512 512"><path fill="#6e6e6e" d="M201.5 174.8l55.7 55.8c3.1 3.1 3.1 8.2 0 11.3l-11.3 11.3c-3.1 3.1-8.2 3.1-11.3 0l-55.7-55.8-45.3 45.3 55.8 55.8c3.1 3.1 3.1 8.2 0 11.3l-11.3 11.3c-3.1 3.1-8.2 3.1-11.3 0L111 265.2l-26.4 26.4c-17.3 17.3-25.6 41.1-23 65.4l7.1 63.6L2.3 487c-3.1 3.1-3.1 8.2 0 11.3l11.3 11.3c3.1 3.1 8.2 3.1 11.3 0l66.3-66.3 63.6 7.1c23.9 2.6 47.9-5.4 65.4-23l181.9-181.9-135.7-135.7-64.9 65zm308.2-93.3L430.5 2.3c-3.1-3.1-8.2-3.1-11.3 0l-11.3 11.3c-3.1 3.1-3.1 8.2 0 11.3l28.3 28.3-45.3 45.3-56.6-56.6-17-17c-3.1-3.1-8.2-3.1-11.3 0l-33.9 33.9c-3.1 3.1-3.1 8.2 0 11.3l17 17L424.8 223l17 17c3.1 3.1 8.2 3.1 11.3 0l33.9-34c3.1-3.1 3.1-8.2 0-11.3l-73.5-73.5 45.3-45.3 28.3 28.3c3.1 3.1 8.2 3.1 11.3 0l11.3-11.3c3.1-3.2 3.1-8.2 0-11.4z"/></svg>
<div class="a" style="left:1216.20px;top:592.30px;width:4px;height:4px;border-radius:50%;background:#111"></div>
<div class="a" style="left:1222.50px;top:592.30px;width:4px;height:4px;border-radius:50%;background:#111"></div>
<div class="a" style="left:1228.80px;top:592.30px;width:4px;height:4px;border-radius:50%;background:#111"></div>
<div class="a" style="left:97px;top:630.44px;width:14px;height:14px;background:#f3f4f6;border-radius:2px;border:1px solid #dcdfe4"></div>
<div class="t" style="left:137px;top:631.51px;font-size:12.2px;color:#3a3f47;">W 4270</div>
<div class="t" style="left:340px;top:631.86px;font-size:12.5px;color:#3a3f47;">02/29/2024</div>
<div class="t" style="left:503px;top:631.51px;font-size:12.2px;color:#3a3f47;">23</div>
<svg style="left:638.5px;top:630.94px;" width="13" height="13" viewBox="0 0 13 13"><g fill="none" stroke="#3a7fdc" stroke-width="1.8"><circle cx="4.9" cy="7.9" r="3.8"/><path d="M7.6 5.2 L11.2 1.6"/></g><path d="M8.5 0.1 H12.7 V4.3 Z" fill="#3a7fdc"/></svg>
<div class="t" style="left:658.5px;top:632.36px;font-size:11.2px;color:#3a3f47;">Bull</div>
<div class="t" style="left:815px;top:631.64px;font-size:12.05px;color:#3a3f47;">Dairy Crossbred</div>
<svg style="left:1087px;top:629.24px;" width="20" height="17" viewBox="0 0 19.5 16.5"><g fill="#6e6e6e"><rect x="7" y="0" width="5.5" height="4.5" rx="0.8"/><rect x="0" y="11.5" width="5.5" height="5" rx="0.8"/><rect x="7" y="11.5" width="5.5" height="5" rx="0.8"/><rect x="14" y="11.5" width="5.5" height="5" rx="0.8"/></g><path d="M9.75 4.5 V11.5 M2.75 11.5 V8 H16.75 V11.5" fill="none" stroke="#6e6e6e" stroke-width="1.3"/></svg>
<svg style="left:1114.8px;top:626.44px;" width="21.8" height="21.8" viewBox="0 0 512 512"><path fill="#6e6e6e" d="M201.5 174.8l55.7 55.8c3.1 3.1 3.1 8.2 0 11.3l-11.3 11.3c-3.1 3.1-8.2 3.1-11.3 0l-55.7-55.8-45.3 45.3 55.8 55.8c3.1 3.1 3.1 8.2 0 11.3l-11.3 11.3c-3.1 3.1-8.2 3.1-11.3 0L111 265.2l-26.4 26.4c-17.3 17.3-25.6 41.1-23 65.4l7.1 63.6L2.3 487c-3.1 3.1-3.1 8.2 0 11.3l11.3 11.3c3.1 3.1 8.2 3.1 11.3 0l66.3-66.3 63.6 7.1c23.9 2.6 47.9-5.4 65.4-23l181.9-181.9-135.7-135.7-64.9 65zm308.2-93.3L430.5 2.3c-3.1-3.1-8.2-3.1-11.3 0l-11.3 11.3c-3.1 3.1-3.1 8.2 0 11.3l28.3 28.3-45.3 45.3-56.6-56.6-17-17c-3.1-3.1-8.2-3.1-11.3 0l-33.9 33.9c-3.1 3.1-3.1 8.2 0 11.3l17 17L424.8 223l17 17c3.1 3.1 8.2 3.1 11.3 0l33.9-34c3.1-3.1 3.1-8.2 0-11.3l-73.5-73.5 45.3-45.3 28.3 28.3c3.1 3.1 8.2 3.1 11.3 0l11.3-11.3c3.1-3.2 3.1-8.2 0-11.4z"/></svg>
<div class="a" style="left:1216.20px;top:635.44px;width:4px;height:4px;border-radius:50%;background:#111"></div>
<div class="a" style="left:1222.50px;top:635.44px;width:4px;height:4px;border-radius:50%;background:#111"></div>
<div class="a" style="left:1228.80px;top:635.44px;width:4px;height:4px;border-radius:50%;background:#111"></div>
<div class="a" style="left:97px;top:673.58px;width:14px;height:14px;background:#f3f4f6;border-radius:2px;border:1px solid #dcdfe4"></div>
<div class="t" style="left:137px;top:674.65px;font-size:12.2px;color:#3a3f47;">W 483</div>
<div class="t" style="left:340px;top:675.00px;font-size:12.5px;color:#3a3f47;">02/29/2024</div>
<div class="t" style="left:503px;top:674.65px;font-size:12.2px;color:#3a3f47;">23</div>
<svg style="left:638.5px;top:674.08px;" width="13" height="13" viewBox="0 0 13 13"><g fill="none" stroke="#f6738a" stroke-width="1.7"><circle cx="6.1" cy="4.26" r="3.45"/><path d="M6.1 7.7 V12.6 M3.9 10.6 H8.3"/></g></svg>
<div class="t" style="left:658.5px;top:675.50px;font-size:11.2px;color:#3a3f47;">Heifer</div>
<div class="t" style="left:815px;top:674.78px;font-size:12.05px;color:#3a3f47;">Dairy Crossbred</div>
<svg style="left:1087px;top:672.38px;" width="20" height="17" viewBox="0 0 19.5 16.5"><g fill="#6e6e6e"><rect x="7" y="0" width="5.5" height="4.5" rx="0.8"/><rect x="0" y="11.5" width="5.5" height="5" rx="0.8"/><rect x="7" y="11.5" width="5.5" height="5" rx="0.8"/><rect x="14" y="11.5" width="5.5" height="5" rx="0.8"/></g><path d="M9.75 4.5 V11.5 M2.75 11.5 V8 H16.75 V11.5" fill="none" stroke="#6e6e6e" stroke-width="1.3"/></svg>
<svg style="left:1114.8px;top:669.58px;" width="21.8" height="21.8" viewBox="0 0 512 512"><path fill="#6e6e6e" d="M201.5 174.8l55.7 55.8c3.1 3.1 3.1 8.2 0 11.3l-11.3 11.3c-3.1 3.1-8.2 3.1-11.3 0l-55.7-55.8-45.3 45.3 55.8 55.8c3.1 3.1 3.1 8.2 0 11.3l-11.3 11.3c-3.1 3.1-8.2 3.1-11.3 0L111 265.2l-26.4 26.4c-17.3 17.3-25.6 41.1-23 65.4l7.1 63.6L2.3 487c-3.1 3.1-3.1 8.2 0 11.3l11.3 11.3c3.1 3.1 8.2 3.1 11.3 0l66.3-66.3 63.6 7.1c23.9 2.6 47.9-5.4 65.4-23l181.9-181.9-135.7-135.7-64.9 65zm308.2-93.3L430.5 2.3c-3.1-3.1-8.2-3.1-11.3 0l-11.3 11.3c-3.1 3.1-3.1 8.2 0 11.3l28.3 28.3-45.3 45.3-56.6-56.6-17-17c-3.1-3.1-8.2-3.1-11.3 0l-33.9 33.9c-3.1 3.1-3.1 8.2 0 11.3l17 17L424.8 223l17 17c3.1 3.1 8.2 3.1 11.3 0l33.9-34c3.1-3.1 3.1-8.2 0-11.3l-73.5-73.5 45.3-45.3 28.3 28.3c3.1 3.1 8.2 3.1 11.3 0l11.3-11.3c3.1-3.2 3.1-8.2 0-11.4z"/></svg>
<div class="a" style="left:1216.20px;top:678.58px;width:4px;height:4px;border-radius:50%;background:#111"></div>
<div class="a" style="left:1222.50px;top:678.58px;width:4px;height:4px;border-radius:50%;background:#111"></div>
<div class="a" style="left:1228.80px;top:678.58px;width:4px;height:4px;border-radius:50%;background:#111"></div>
<div class="a" style="left:323px;top:357px;width:2px;height:354px;background:#eff0f2;"></div>
<div class="a" style="left:0px;top:711px;width:1280px;height:9px;background:#ffffff;"></div>
<div class="a" style="left:1212px;top:642.6px;width:54px;height:54px;border-radius:50%;background:#fdc500;box-shadow:0 2px 6px rgba(0,0,0,.18)"></div>
<svg style="left:1226px;top:657px;" width="27" height="25" viewBox="0 0 27 25"><g fill="none" stroke="#2f405a" stroke-width="2" stroke-linecap="round" stroke-linejoin="round"><path d="M8 1 H24 Q25.5 1 25.5 2.5 V13"/><path d="M2.5 4.5 H19 Q21 4.5 21 6.5 V15.5 Q21 17.5 19 17.5 H8 L2 23.5 V6.5 Q2 4.5 4 4.5"/></g></svg>
<div class="a" style="left:1195.70px;top:664.60px;width:3.2px;height:3.2px;border-radius:50%;background:#6b6b6b"></div>
<div class="a" style="left:1195.70px;top:671.50px;width:3.2px;height:3.2px;border-radius:50%;background:#6b6b6b"></div>
<div class="a" style="left:1195.70px;top:678.40px;width:3.2px;height:3.2px;border-radius:50%;background:#6b6b6b"></div>
<div class="a" style="left:1202.70px;top:664.60px;width:3.2px;height:3.2px;border-radius:50%;background:#6b6b6b"></div>
<div class="a" style="left:1202.70px;top:671.50px;width:3.2px;height:3.2px;border-radius:50%;background:#6b6b6b"></div>
<div class="a" style="left:1202.70px;top:678.40px;width:3.2px;height:3.2px;border-radius:50%;background:#6b6b6b"></div>
<svg style="left:0;top:0" width="1280" height="720" viewBox="0 0 1280 720"><path d="M193.88 124.94 L193.89 127.07 L193.80 128.57 L193.63 129.90 L193.36 131.13 L193.02 132.28 L192.58 133.37 L192.06 134.42 L191.46 135.42 L190.77 136.39 L190.00 137.32 L189.15 138.22 L188.21 139.09 L187.19 139.94 L186.09 140.75 L184.91 141.53 L183.65 142.29 L182.30 143.02 L180.87 143.73 L179.37 144.40 L177.78 145.06 L176.11 145.68 L174.37 146.28 L172.54 146.85 L170.63 147.39 L168.64 147.91 L166.57 148.40 L164.42 148.86 L162.18 149.30 L159.85 149.70 L157.43 150.09 L154.92 150.44 L152.31 150.77 L149.58 151.06 L146.74 151.34 L143.75 151.58 L140.60 151.80 L137.24 152.00 L133.59 152.17 L129.45 152.32 L123.57 152.49 L120.79 152.54 L118.00 152.56 L115.23 152.53 L112.46 152.47 L109.71 152.36 L106.99 152.22 L104.28 152.03 L101.61 151.81 L98.97 151.55 L96.36 151.25 L93.80 150.91 L91.28 150.53 L88.81 150.12 L86.39 149.68 L84.03 149.19 L81.73 148.68 L79.49 148.13 L77.32 147.54 L75.22 146.93 L73.19 146.28 L71.24 145.60 L69.37 144.90 L67.58 144.16 L65.87 143.40 L64.26 142.62 L62.73 141.81 L61.30 140.97 L59.97 140.12 L58.73 139.24 L57.58 138.35 L56.54 137.44 L55.61 136.51 L54.77 135.56 L54.04 134.60 L53.42 133.63 L52.90 132.65 L52.50 131.67 L52.20 130.67 L52.01 129.67 L51.92 128.66 L51.95 127.65 L52.09 126.64 L52.34 125.63 L52.69 124.62 L53.16 123.61 L53.73 122.61 L54.41 121.62 L55.19 120.63 L56.08 119.65 L57.07 118.69 L58.16 117.73 L59.35 116.79 L60.65 115.87 L62.03 114.96 L63.51 114.07 L65.08 113.20 L66.75 112.35 L68.49 111.53 L70.32 110.73 L72.24 109.95 L74.23 109.20 L76.29 108.47 L78.43 107.77 L80.64 107.11 L82.91 106.47 L85.24 105.87 L87.63 105.29 L90.08 104.75 L92.57 104.25 L95.12 103.78 L97.70 103.34 L100.33 102.94 L102.99 102.58 L105.68 102.25 L108.39 101.97 L111.13 101.72 L113.89 101.51 L116.66 101.33 L119.44 101.20 L122.23 101.11 L128.11 100.97 L132.25 100.91 L135.90 100.89 L139.27 100.91 L142.43 100.96 L145.42 101.05 L148.28 101.17 L151.01 101.33 L153.64 101.52 L156.17 101.74 L158.60 101.99 L160.95 102.28 L163.21 102.60 L165.38 102.95 L167.48 103.33 L169.49 103.74 L171.42 104.18 L173.28 104.66 L175.05 105.16 L176.75 105.70 L178.37 106.26 L179.91 106.86 L181.37 107.49 L182.75 108.15 L184.05 108.84 L185.28 109.56 L186.42 110.32 L187.48 111.10 L188.46 111.92 L189.36 112.78 L190.18 113.67 L190.92 114.60 L191.57 115.57 L192.14 116.59 L192.63 117.66 L193.04 118.79 L193.37 120.00 L193.61 121.32 L193.78 122.81Z" fill="none" stroke="#ffc700" stroke-width="3.2" stroke-linejoin="round"/><path d="M146.12 99.78 L147.76 99.85 L149.36 99.93 L150.92 100.02 L152.45 100.12 L153.95 100.24 L155.41 100.36 L156.85 100.50 L158.25 100.65 L159.62 100.80 L160.97 100.97 L162.29 101.15 L163.58 101.34 L164.84 101.54 L166.08 101.75 L167.29 101.97 L168.48 102.20 L169.64 102.44 L170.77 102.69 L171.88 102.96 L172.97 103.23 L174.03 103.51 L175.06 103.81 L176.07 104.11 L177.05 104.43 L178.01 104.75 L178.95 105.09 L179.86 105.44 L180.74 105.80 L181.60 106.17 L182.44 106.55 L183.25 106.94 L184.03 107.35 L184.79 107.77 L185.53 108.19 L186.24 108.63 L186.92 109.09 L187.58 109.55 L188.22 110.03 L188.82 110.52 L189.41 111.03 L189.96 111.54 L190.49 112.08 L190.99 112.63 L191.47 113.19 L191.92 113.77 L192.34 114.36 L192.73 114.98 L193.09 115.61 L193.43 116.26 L193.73 116.92 L194.01 117.61 L194.26 118.32 L194.47 119.06 L194.66 119.82 L194.82 120.62 L194.95 121.46 L195.04 122.37 L195.12 123.37 L195.17 124.65 L195.20 126.20 L195.19 127.24 L195.14 128.16 L195.06 129.02 L194.95 129.84 L194.81 130.62 L194.64 131.37 L194.44 132.10 L194.21 132.80 L193.94 133.49 L193.65 134.16 L191.03 132.93 L191.01 132.28 L191.06 131.68 L191.10 131.08 L191.14 130.48 L191.15 129.87 L191.15 129.24 L191.13 128.58 L191.10 127.88 L191.04 127.11 L190.96 126.22 L190.85 124.77 L190.72 123.61 L190.58 122.77 L190.43 122.05 L190.26 121.41 L190.08 120.83 L189.88 120.29 L189.67 119.79 L189.45 119.31 L189.21 118.86 L188.96 118.43 L188.69 118.01 L188.41 117.60 L188.11 117.21 L187.79 116.82 L187.45 116.43 L187.09 116.05 L186.71 115.68 L186.31 115.30 L185.89 114.93 L185.44 114.56 L184.96 114.19 L184.46 113.83 L183.93 113.46 L183.38 113.10 L182.80 112.73 L182.19 112.37 L181.55 112.02 L180.89 111.66 L180.20 111.31 L179.48 110.96 L178.73 110.61 L177.95 110.27 L177.15 109.93 L176.31 109.60 L175.45 109.27 L174.56 108.94 L173.65 108.62 L172.70 108.30 L171.73 107.99 L170.73 107.68 L169.70 107.38 L168.64 107.09 L167.55 106.80 L166.43 106.51 L165.29 106.23 L164.12 105.96 L162.92 105.69 L161.68 105.43 L160.42 105.17 L159.13 104.92 L157.81 104.68 L156.45 104.43 L155.07 104.20 L153.65 103.96 L152.19 103.73 L150.70 103.50 L149.18 103.27 L147.61 103.02 L146.00 102.67Z" fill="#ffc700"/></svg>
<svg style="left:0;top:0" width="1280" height="720" viewBox="0 0 1280 720"><path d="M517.15 291.83 L517.19 294.91 L517.08 297.08 L516.84 299.01 L516.47 300.78 L515.99 302.45 L515.38 304.04 L514.65 305.56 L513.80 307.01 L512.83 308.42 L511.74 309.77 L510.54 311.08 L509.21 312.35 L507.77 313.58 L506.21 314.76 L504.53 315.91 L502.74 317.01 L500.83 318.08 L498.81 319.11 L496.67 320.10 L494.42 321.05 L492.06 321.97 L489.58 322.84 L486.98 323.68 L484.27 324.48 L481.45 325.24 L478.50 325.97 L475.44 326.65 L472.26 327.30 L468.95 327.90 L465.52 328.47 L461.95 329.00 L458.23 329.49 L454.36 329.94 L450.31 330.35 L446.07 330.73 L441.59 331.07 L436.81 331.37 L431.62 331.65 L425.73 331.90 L417.37 332.18 L413.40 332.28 L409.44 332.32 L405.49 332.30 L401.56 332.22 L397.65 332.09 L393.77 331.89 L389.92 331.65 L386.12 331.34 L382.36 330.98 L378.65 330.57 L375.00 330.09 L371.41 329.57 L367.89 328.99 L364.45 328.36 L361.09 327.68 L357.81 326.95 L354.62 326.16 L351.53 325.33 L348.53 324.46 L345.64 323.53 L342.86 322.57 L340.20 321.56 L337.65 320.51 L335.22 319.42 L332.91 318.29 L330.74 317.13 L328.69 315.94 L326.78 314.71 L325.01 313.45 L323.38 312.16 L321.89 310.85 L320.55 309.51 L319.36 308.15 L318.31 306.76 L317.42 305.37 L316.68 303.95 L316.09 302.52 L315.65 301.08 L315.37 299.63 L315.25 298.17 L315.28 296.71 L315.47 295.25 L315.81 293.78 L316.31 292.32 L316.96 290.86 L317.77 289.40 L318.72 287.96 L319.83 286.53 L321.09 285.11 L322.49 283.70 L324.03 282.31 L325.72 280.95 L327.55 279.60 L329.52 278.28 L331.61 276.98 L333.84 275.71 L336.20 274.47 L338.68 273.26 L341.28 272.09 L343.99 270.95 L346.82 269.85 L349.75 268.79 L352.78 267.76 L355.92 266.78 L359.14 265.85 L362.46 264.96 L365.85 264.11 L369.33 263.31 L372.88 262.56 L376.49 261.86 L380.16 261.21 L383.89 260.62 L387.67 260.08 L391.50 259.59 L395.36 259.15 L399.25 258.77 L403.17 258.45 L407.11 258.18 L411.07 257.97 L415.03 257.82 L423.40 257.58 L429.28 257.46 L434.48 257.41 L439.27 257.41 L443.77 257.47 L448.02 257.58 L452.09 257.73 L455.98 257.94 L459.72 258.20 L463.32 258.50 L466.78 258.85 L470.12 259.25 L473.34 259.69 L476.44 260.18 L479.42 260.72 L482.29 261.30 L485.04 261.93 L487.68 262.61 L490.21 263.33 L492.63 264.09 L494.94 264.90 L497.13 265.75 L499.22 266.65 L501.19 267.60 L503.05 268.59 L504.79 269.63 L506.42 270.71 L507.94 271.84 L509.34 273.02 L510.63 274.26 L511.80 275.54 L512.85 276.88 L513.79 278.28 L514.62 279.75 L515.32 281.30 L515.91 282.93 L516.39 284.68 L516.75 286.59 L516.99 288.75Z" fill="none" stroke="#ffc700" stroke-width="4.0" stroke-linejoin="round"/><path d="M449.00 255.91 L451.34 256.00 L453.62 256.11 L455.84 256.23 L458.02 256.37 L460.14 256.52 L462.23 256.69 L464.26 256.88 L466.26 257.08 L468.21 257.30 L470.13 257.54 L472.00 257.78 L473.84 258.05 L475.64 258.33 L477.40 258.62 L479.12 258.94 L480.81 259.26 L482.46 259.60 L484.08 259.96 L485.66 260.33 L487.20 260.72 L488.71 261.12 L490.18 261.54 L491.61 261.98 L493.02 262.43 L494.38 262.89 L495.71 263.37 L497.01 263.87 L498.26 264.38 L499.49 264.91 L500.68 265.46 L501.83 266.02 L502.95 266.60 L504.03 267.19 L505.07 267.80 L506.08 268.43 L507.06 269.08 L508.00 269.75 L508.90 270.43 L509.76 271.14 L510.59 271.86 L511.38 272.60 L512.13 273.37 L512.85 274.15 L513.52 274.96 L514.16 275.79 L514.76 276.64 L515.32 277.52 L515.84 278.42 L516.31 279.35 L516.75 280.30 L517.14 281.29 L517.50 282.31 L517.81 283.36 L518.08 284.46 L518.31 285.60 L518.50 286.81 L518.64 288.11 L518.75 289.55 L518.84 291.40 L518.89 293.64 L518.88 295.14 L518.83 296.47 L518.72 297.70 L518.58 298.87 L518.39 299.99 L518.15 301.07 L517.87 302.12 L517.55 303.13 L517.18 304.12 L516.78 305.08 L513.41 303.55 L513.39 302.61 L513.46 301.72 L513.52 300.84 L513.57 299.96 L513.59 299.06 L513.59 298.13 L513.56 297.16 L513.50 296.13 L513.42 295.00 L513.30 293.69 L513.12 291.59 L512.93 289.90 L512.73 288.67 L512.50 287.61 L512.26 286.67 L511.99 285.81 L511.70 285.01 L511.39 284.26 L511.06 283.55 L510.71 282.88 L510.34 282.24 L509.95 281.61 L509.54 281.01 L509.10 280.42 L508.63 279.85 L508.14 279.28 L507.61 278.72 L507.06 278.17 L506.48 277.62 L505.86 277.07 L505.21 276.53 L504.52 276.00 L503.79 275.46 L503.03 274.93 L502.24 274.40 L501.40 273.88 L500.52 273.36 L499.61 272.84 L498.66 272.33 L497.66 271.82 L496.63 271.32 L495.56 270.82 L494.45 270.33 L493.30 269.84 L492.11 269.36 L490.87 268.89 L489.60 268.42 L488.29 267.97 L486.94 267.51 L485.55 267.07 L484.12 266.64 L482.65 266.21 L481.14 265.79 L479.59 265.38 L478.00 264.97 L476.36 264.58 L474.69 264.19 L472.98 263.82 L471.22 263.45 L469.42 263.09 L467.58 262.73 L465.69 262.39 L463.76 262.05 L461.79 261.72 L459.76 261.40 L457.69 261.08 L455.57 260.75 L453.39 260.43 L451.16 260.08 L448.87 259.60Z" fill="#ffc700"/></svg>
<svg style="left:0;top:0" width="1280" height="720" viewBox="0 0 1280 720"><path d="M754.08 265.86 L754.09 268.20 L753.99 269.85 L753.80 271.30 L753.51 272.65 L753.13 273.91 L752.66 275.11 L752.10 276.25 L751.44 277.35 L750.70 278.41 L749.87 279.43 L748.94 280.42 L747.93 281.37 L746.83 282.29 L745.64 283.18 L744.37 284.03 L743.00 284.86 L741.55 285.66 L740.01 286.42 L738.38 287.16 L736.67 287.87 L734.87 288.54 L732.99 289.19 L731.02 289.81 L728.96 290.40 L726.82 290.96 L724.58 291.49 L722.26 291.98 L719.85 292.45 L717.34 292.89 L714.73 293.30 L712.02 293.68 L709.21 294.02 L706.27 294.34 L703.20 294.62 L699.99 294.88 L696.59 295.11 L692.97 295.31 L689.03 295.48 L684.58 295.63 L678.24 295.79 L675.24 295.84 L672.24 295.84 L669.25 295.80 L666.27 295.72 L663.31 295.59 L660.37 295.42 L657.46 295.21 L654.57 294.95 L651.73 294.65 L648.92 294.31 L646.16 293.93 L643.45 293.51 L640.79 293.05 L638.18 292.55 L635.64 292.01 L633.16 291.43 L630.75 290.81 L628.42 290.17 L626.15 289.48 L623.97 288.76 L621.87 288.01 L619.86 287.23 L617.93 286.42 L616.10 285.58 L614.36 284.71 L612.72 283.81 L611.18 282.89 L609.75 281.95 L608.41 280.98 L607.19 279.99 L606.07 278.99 L605.06 277.96 L604.16 276.92 L603.38 275.87 L602.71 274.80 L602.16 273.72 L601.73 272.64 L601.41 271.54 L601.20 270.44 L601.12 269.34 L601.15 268.23 L601.31 267.12 L601.57 266.01 L601.96 264.90 L602.46 263.80 L603.08 262.71 L603.82 261.62 L604.67 260.54 L605.63 259.47 L606.70 258.41 L607.88 257.37 L609.17 256.35 L610.56 255.34 L612.06 254.35 L613.65 253.38 L615.35 252.43 L617.14 251.51 L619.03 250.61 L621.00 249.74 L623.07 248.89 L625.22 248.08 L627.44 247.29 L629.75 246.53 L632.13 245.81 L634.58 245.12 L637.09 244.47 L639.67 243.85 L642.31 243.27 L645.00 242.72 L647.74 242.22 L650.53 241.75 L653.36 241.32 L656.22 240.94 L659.12 240.59 L662.05 240.29 L665.00 240.03 L667.98 239.81 L670.96 239.63 L673.96 239.50 L676.96 239.41 L683.30 239.28 L687.76 239.23 L691.70 239.22 L695.32 239.26 L698.73 239.33 L701.95 239.44 L705.03 239.59 L707.97 239.77 L710.81 239.99 L713.53 240.24 L716.15 240.53 L718.68 240.86 L721.11 241.21 L723.45 241.61 L725.71 242.03 L727.88 242.50 L729.96 242.99 L731.95 243.52 L733.87 244.08 L735.69 244.68 L737.43 245.30 L739.09 245.97 L740.66 246.66 L742.15 247.39 L743.55 248.16 L744.87 248.95 L746.09 249.79 L747.24 250.65 L748.29 251.56 L749.26 252.50 L750.13 253.48 L750.93 254.51 L751.63 255.58 L752.24 256.69 L752.77 257.87 L753.20 259.11 L753.55 260.44 L753.81 261.89 L753.98 263.53Z" fill="none" stroke="#ffc700" stroke-width="3.2" stroke-linejoin="round"/><path d="M702.70 238.17 L704.47 238.26 L706.20 238.35 L707.88 238.46 L709.53 238.58 L711.14 238.71 L712.71 238.86 L714.26 239.01 L715.77 239.18 L717.25 239.36 L718.69 239.55 L720.11 239.75 L721.50 239.96 L722.86 240.19 L724.20 240.42 L725.50 240.67 L726.78 240.93 L728.02 241.20 L729.24 241.48 L730.44 241.77 L731.60 242.07 L732.74 242.39 L733.86 242.72 L734.94 243.06 L736.00 243.41 L737.03 243.77 L738.03 244.14 L739.01 244.53 L739.96 244.92 L740.89 245.33 L741.78 245.76 L742.65 246.19 L743.50 246.63 L744.31 247.09 L745.10 247.57 L745.86 248.05 L746.59 248.55 L747.30 249.06 L747.98 249.58 L748.63 250.12 L749.25 250.68 L749.85 251.25 L750.41 251.83 L750.95 252.43 L751.45 253.05 L751.93 253.68 L752.38 254.33 L752.80 255.00 L753.18 255.69 L753.54 256.39 L753.86 257.12 L754.16 257.87 L754.42 258.65 L754.65 259.45 L754.84 260.28 L755.01 261.15 L755.14 262.07 L755.25 263.06 L755.32 264.15 L755.37 265.55 L755.40 267.25 L755.38 268.39 L755.33 269.39 L755.25 270.33 L755.13 271.22 L754.98 272.07 L754.79 272.88 L754.57 273.67 L754.32 274.44 L754.04 275.19 L753.72 275.91 L751.09 274.69 L751.08 273.98 L751.13 273.31 L751.19 272.65 L751.22 271.98 L751.24 271.31 L751.25 270.61 L751.23 269.88 L751.19 269.10 L751.13 268.24 L751.05 267.25 L750.93 265.66 L750.80 264.38 L750.65 263.45 L750.49 262.65 L750.31 261.94 L750.11 261.29 L749.90 260.68 L749.67 260.12 L749.43 259.59 L749.17 259.08 L748.89 258.59 L748.60 258.12 L748.29 257.67 L747.96 257.22 L747.62 256.79 L747.25 256.36 L746.86 255.93 L746.45 255.51 L746.01 255.10 L745.55 254.68 L745.06 254.27 L744.55 253.86 L744.01 253.45 L743.44 253.05 L742.84 252.64 L742.21 252.24 L741.55 251.84 L740.87 251.45 L740.15 251.05 L739.40 250.66 L738.63 250.28 L737.82 249.89 L736.99 249.51 L736.12 249.14 L735.22 248.77 L734.29 248.40 L733.34 248.04 L732.35 247.68 L731.33 247.33 L730.28 246.99 L729.20 246.65 L728.09 246.31 L726.95 245.99 L725.78 245.66 L724.58 245.35 L723.35 245.04 L722.09 244.73 L720.79 244.43 L719.46 244.14 L718.11 243.86 L716.71 243.58 L715.29 243.30 L713.83 243.03 L712.34 242.77 L710.81 242.51 L709.24 242.25 L707.64 241.99 L705.99 241.73 L704.31 241.45 L702.58 241.07Z" fill="#ffc700"/></svg>
</body></html>
